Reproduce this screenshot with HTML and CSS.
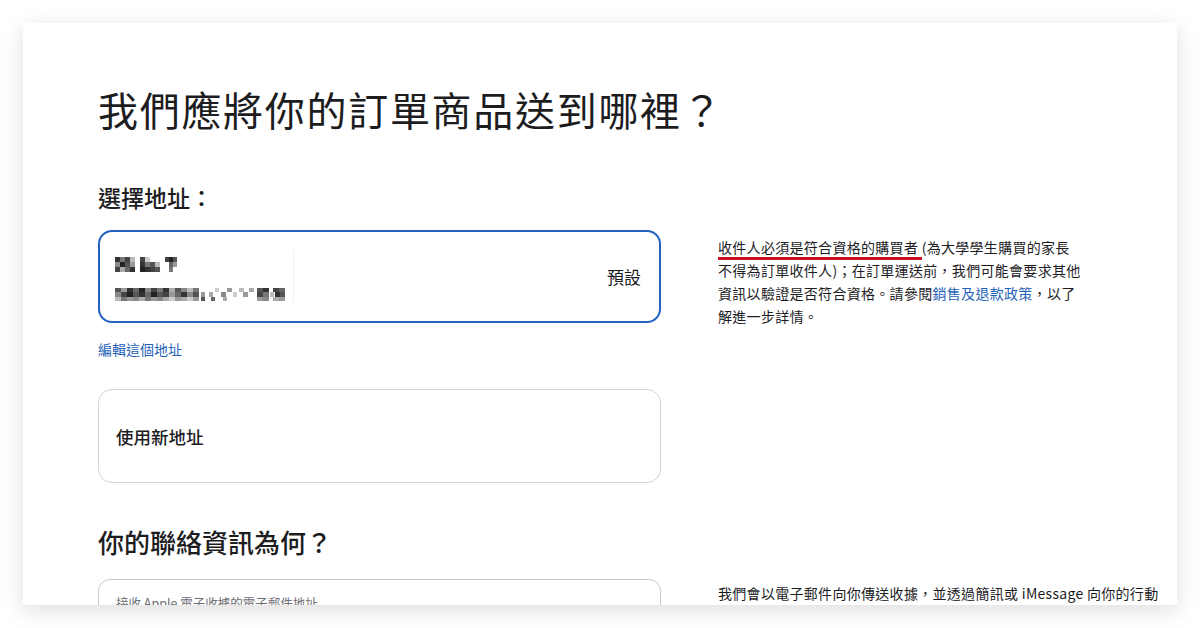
FILE: index.html
```html
<!DOCTYPE html>
<html lang="zh-Hant">
<head>
    <meta charset="UTF-8">
    <meta name="viewport" content="width=device-width, initial-scale=1.0">
    <title>送貨地址</title>
    <link rel="stylesheet" href="styles.css">
</head>
<body>
    <div class="panel">
        <h1 class="page-title">我們應將你的訂單商品送到哪裡？</h1>

        <h2 class="sub-title">選擇地址：</h2>
        <div class="row">
            <div class="left">
                <div class="addr-card selected">
                    <svg class="blur" width="180" height="52" viewBox="0 0 180 52">
                        <rect x="0" y="6" width="5" height="5" fill="#333"/><rect x="5" y="6" width="5" height="5" fill="#777"/><rect x="10" y="6" width="5" height="5" fill="#444"/><rect x="15" y="6" width="5" height="5" fill="#bbb"/>
                        <rect x="0" y="11" width="5" height="5" fill="#888"/><rect x="5" y="11" width="5" height="5" fill="#222"/><rect x="10" y="11" width="5" height="5" fill="#555"/><rect x="15" y="11" width="5" height="5" fill="#999"/>
                        <rect x="0" y="16" width="5" height="5" fill="#444"/><rect x="5" y="16" width="5" height="5" fill="#aaa"/><rect x="10" y="16" width="5" height="5" fill="#666"/><rect x="15" y="16" width="5" height="5" fill="#333"/>
                        <rect x="25" y="6" width="5" height="5" fill="#444"/><rect x="30" y="6" width="5" height="5" fill="#ccc"/>
                        <rect x="25" y="11" width="5" height="5" fill="#333"/><rect x="30" y="11" width="5" height="5" fill="#777"/><rect x="35" y="11" width="5" height="5" fill="#555"/><rect x="40" y="11" width="5" height="5" fill="#bbb"/>
                        <rect x="25" y="16" width="5" height="5" fill="#222"/><rect x="30" y="16" width="5" height="5" fill="#333"/><rect x="35" y="16" width="5" height="5" fill="#444"/><rect x="40" y="16" width="5" height="5" fill="#555"/>
                        <rect x="50" y="6" width="4" height="5" fill="#444"/><rect x="54" y="6" width="4" height="5" fill="#222"/><rect x="58" y="6" width="4" height="5" fill="#555"/>
                        <rect x="54" y="11" width="4" height="5" fill="#666"/><rect x="58" y="11" width="4" height="5" fill="#999"/><rect x="54" y="16" width="4" height="5" fill="#777"/>

                        <rect x="0" y="37" width="6" height="4" fill="#555"/><rect x="6" y="37" width="6" height="4" fill="#999"/><rect x="12" y="37" width="6" height="4" fill="#333"/><rect x="18" y="37" width="6" height="4" fill="#666"/><rect x="24" y="37" width="6" height="4" fill="#222"/><rect x="30" y="37" width="6" height="4" fill="#888"/><rect x="36" y="37" width="6" height="4" fill="#444"/><rect x="42" y="37" width="6" height="4" fill="#777"/><rect x="48" y="37" width="6" height="4" fill="#333"/><rect x="54" y="37" width="6" height="4" fill="#aaa"/><rect x="60" y="37" width="6" height="4" fill="#555"/><rect x="66" y="37" width="6" height="4" fill="#888"/><rect x="72" y="37" width="6" height="4" fill="#bbb"/><rect x="78" y="37" width="6" height="4" fill="#777"/><rect x="100" y="37" width="4" height="4" fill="#ccc"/><rect x="112" y="37" width="5" height="4" fill="#999"/><rect x="124" y="37" width="5" height="4" fill="#bbb"/><rect x="134" y="37" width="5" height="4" fill="#aaa"/><rect x="142" y="37" width="6" height="4" fill="#555"/><rect x="148" y="37" width="6" height="4" fill="#333"/><rect x="158" y="37" width="6" height="4" fill="#444"/><rect x="164" y="37" width="6" height="4" fill="#666"/>
                        <rect x="0" y="41" width="6" height="5" fill="#888"/><rect x="6" y="41" width="6" height="5" fill="#444"/><rect x="12" y="41" width="6" height="5" fill="#222"/><rect x="18" y="41" width="6" height="5" fill="#555"/><rect x="24" y="41" width="6" height="5" fill="#333"/><rect x="30" y="41" width="6" height="5" fill="#666"/><rect x="36" y="41" width="6" height="5" fill="#222"/><rect x="42" y="41" width="6" height="5" fill="#555"/><rect x="48" y="41" width="6" height="5" fill="#444"/><rect x="54" y="41" width="6" height="5" fill="#999"/><rect x="60" y="41" width="6" height="5" fill="#666"/><rect x="66" y="41" width="6" height="5" fill="#333"/><rect x="72" y="41" width="6" height="5" fill="#888"/><rect x="78" y="41" width="6" height="5" fill="#555"/><rect x="86" y="41" width="4" height="5" fill="#999"/><rect x="94" y="41" width="4" height="5" fill="#aaa"/><rect x="106" y="41" width="5" height="5" fill="#888"/><rect x="118" y="41" width="4" height="5" fill="#ccc"/><rect x="128" y="41" width="5" height="5" fill="#999"/><rect x="142" y="41" width="6" height="5" fill="#444"/><rect x="148" y="41" width="6" height="5" fill="#777"/><rect x="155" y="41" width="4" height="5" fill="#bbb"/><rect x="160" y="41" width="5" height="5" fill="#333"/><rect x="165" y="41" width="5" height="5" fill="#555"/>
                        <rect x="0" y="46" width="6" height="4" fill="#bbb"/><rect x="6" y="46" width="6" height="4" fill="#777"/><rect x="12" y="46" width="6" height="4" fill="#999"/><rect x="18" y="46" width="6" height="4" fill="#888"/><rect x="24" y="46" width="6" height="4" fill="#aaa"/><rect x="30" y="46" width="6" height="4" fill="#777"/><rect x="36" y="46" width="6" height="4" fill="#999"/><rect x="42" y="46" width="6" height="4" fill="#888"/><rect x="48" y="46" width="6" height="4" fill="#aaa"/><rect x="54" y="46" width="6" height="4" fill="#ccc"/><rect x="60" y="46" width="6" height="4" fill="#999"/><rect x="66" y="46" width="6" height="4" fill="#aaa"/><rect x="72" y="46" width="6" height="4" fill="#ccc"/><rect x="78" y="46" width="6" height="4" fill="#999"/><rect x="86" y="46" width="4" height="4" fill="#555"/><rect x="96" y="46" width="4" height="4" fill="#666"/><rect x="108" y="46" width="4" height="4" fill="#aaa"/><rect x="142" y="46" width="6" height="4" fill="#999"/><rect x="148" y="46" width="6" height="4" fill="#888"/><rect x="158" y="46" width="6" height="4" fill="#aaa"/><rect x="164" y="46" width="6" height="4" fill="#999"/>
                        <rect x="178" y="0" width="1" height="52" fill="#f2f2f2"/>
                    </svg>
                    <span class="default-tag">預設</span>
                </div>
                <a class="edit-link" href="#">編輯這個地址</a>
                <div class="addr-card new-addr">
                    <span>使用新地址</span>
                </div>
            </div>
            <div class="right">
                <p class="note">
                    <span class="marked">收件人必須是符合資格的購買者 </span>(為大學學生購買的家長<br>不得為訂單收件人)；在訂單運送前，我們可能會要求其他<br>資訊以驗證是否符合資格。請參閱<a href="#">銷售及退款政策</a>，以了<br>解進一步詳情。
                </p>
            </div>
        </div>

        <h2 class="section-title">你的聯絡資訊為何？</h2>
        <div class="row">
            <div class="left">
                <div class="field">
                    <span class="field-label">接收 Apple 電子收據的電子郵件地址</span>
                </div>
            </div>
            <div class="right">
                <p class="note wide">我們會以電子郵件向你傳送收據，並透過簡訊或 iMessage 向你的行動裝置傳送送貨通知。</p>
            </div>
        </div>
    </div>
</body>
</html>
```

FILE: styles.css
```css
body{
  margin: 0;
  background-color: #fff;
  font-family: "Noto Sans CJK TC", "Noto Sans", sans-serif;
  color: #1d1d1f;
}

.panel{
  margin: 23px;
  height: 582px;
  overflow: hidden;
  background-color: #fff;
  box-shadow: 0 6px 22px rgba(0,0,0,0.13);
  padding: 62px 0 0 75px;
  box-sizing: border-box;
}

.page-title{
  margin: 0;
  font-size: 40px;
  line-height: 48px;
  font-weight: 400;
  letter-spacing: 1.7px;
}

.sub-title{
  margin: 49px 0 18px;
  font-size: 23px;
  line-height: 30px;
  font-weight: 500;
}

.section-title{
  margin: 42px 0 20px;
  font-size: 26px;
  line-height: 34px;
  font-weight: 500;
}

.row{
  display: grid;
  grid-template-columns: 563px 1fr;
  column-gap: 57px;
}

.addr-card{
  display: flex;
  align-items: center;
  height: 94px;
  box-sizing: border-box;
  border: 1px solid #d2d2d7;
  border-radius: 14px;
  padding: 0 18px 0 17px;
}

.addr-card.selected{
  height: 93px;
  border: 2px solid #2462c2;
  padding-left: 15px;
}

.default-tag{
  margin-left: auto;
  font-size: 17px;
}

.new-addr{
  margin-top: 30px;
  font-size: 17.5px;
  font-weight: 500;
}

.edit-link{
  display: block;
  margin-top: 16px;
  font-size: 14px;
  line-height: 20px;
  color: #1f63b8;
  text-decoration: none;
}

.note{
  margin: 6px 0 0;
  font-size: 14px;
  line-height: 23px;
  letter-spacing: 0.3px;
}

.note a{
  color: #1f63b8;
  text-decoration: none;
}

.note.wide{
  width: 448px;
  margin-top: 3px;
}

.marked{
  border-bottom: 3px solid #c8101e;
}

.field{
  height: 58px;
  box-sizing: border-box;
  border: 1px solid #c8c8cc;
  border-radius: 12px;
  padding: 9px 17px 0;
}

.field-label{
  font-size: 12.5px;
  color: #6e6e73;
}
```
